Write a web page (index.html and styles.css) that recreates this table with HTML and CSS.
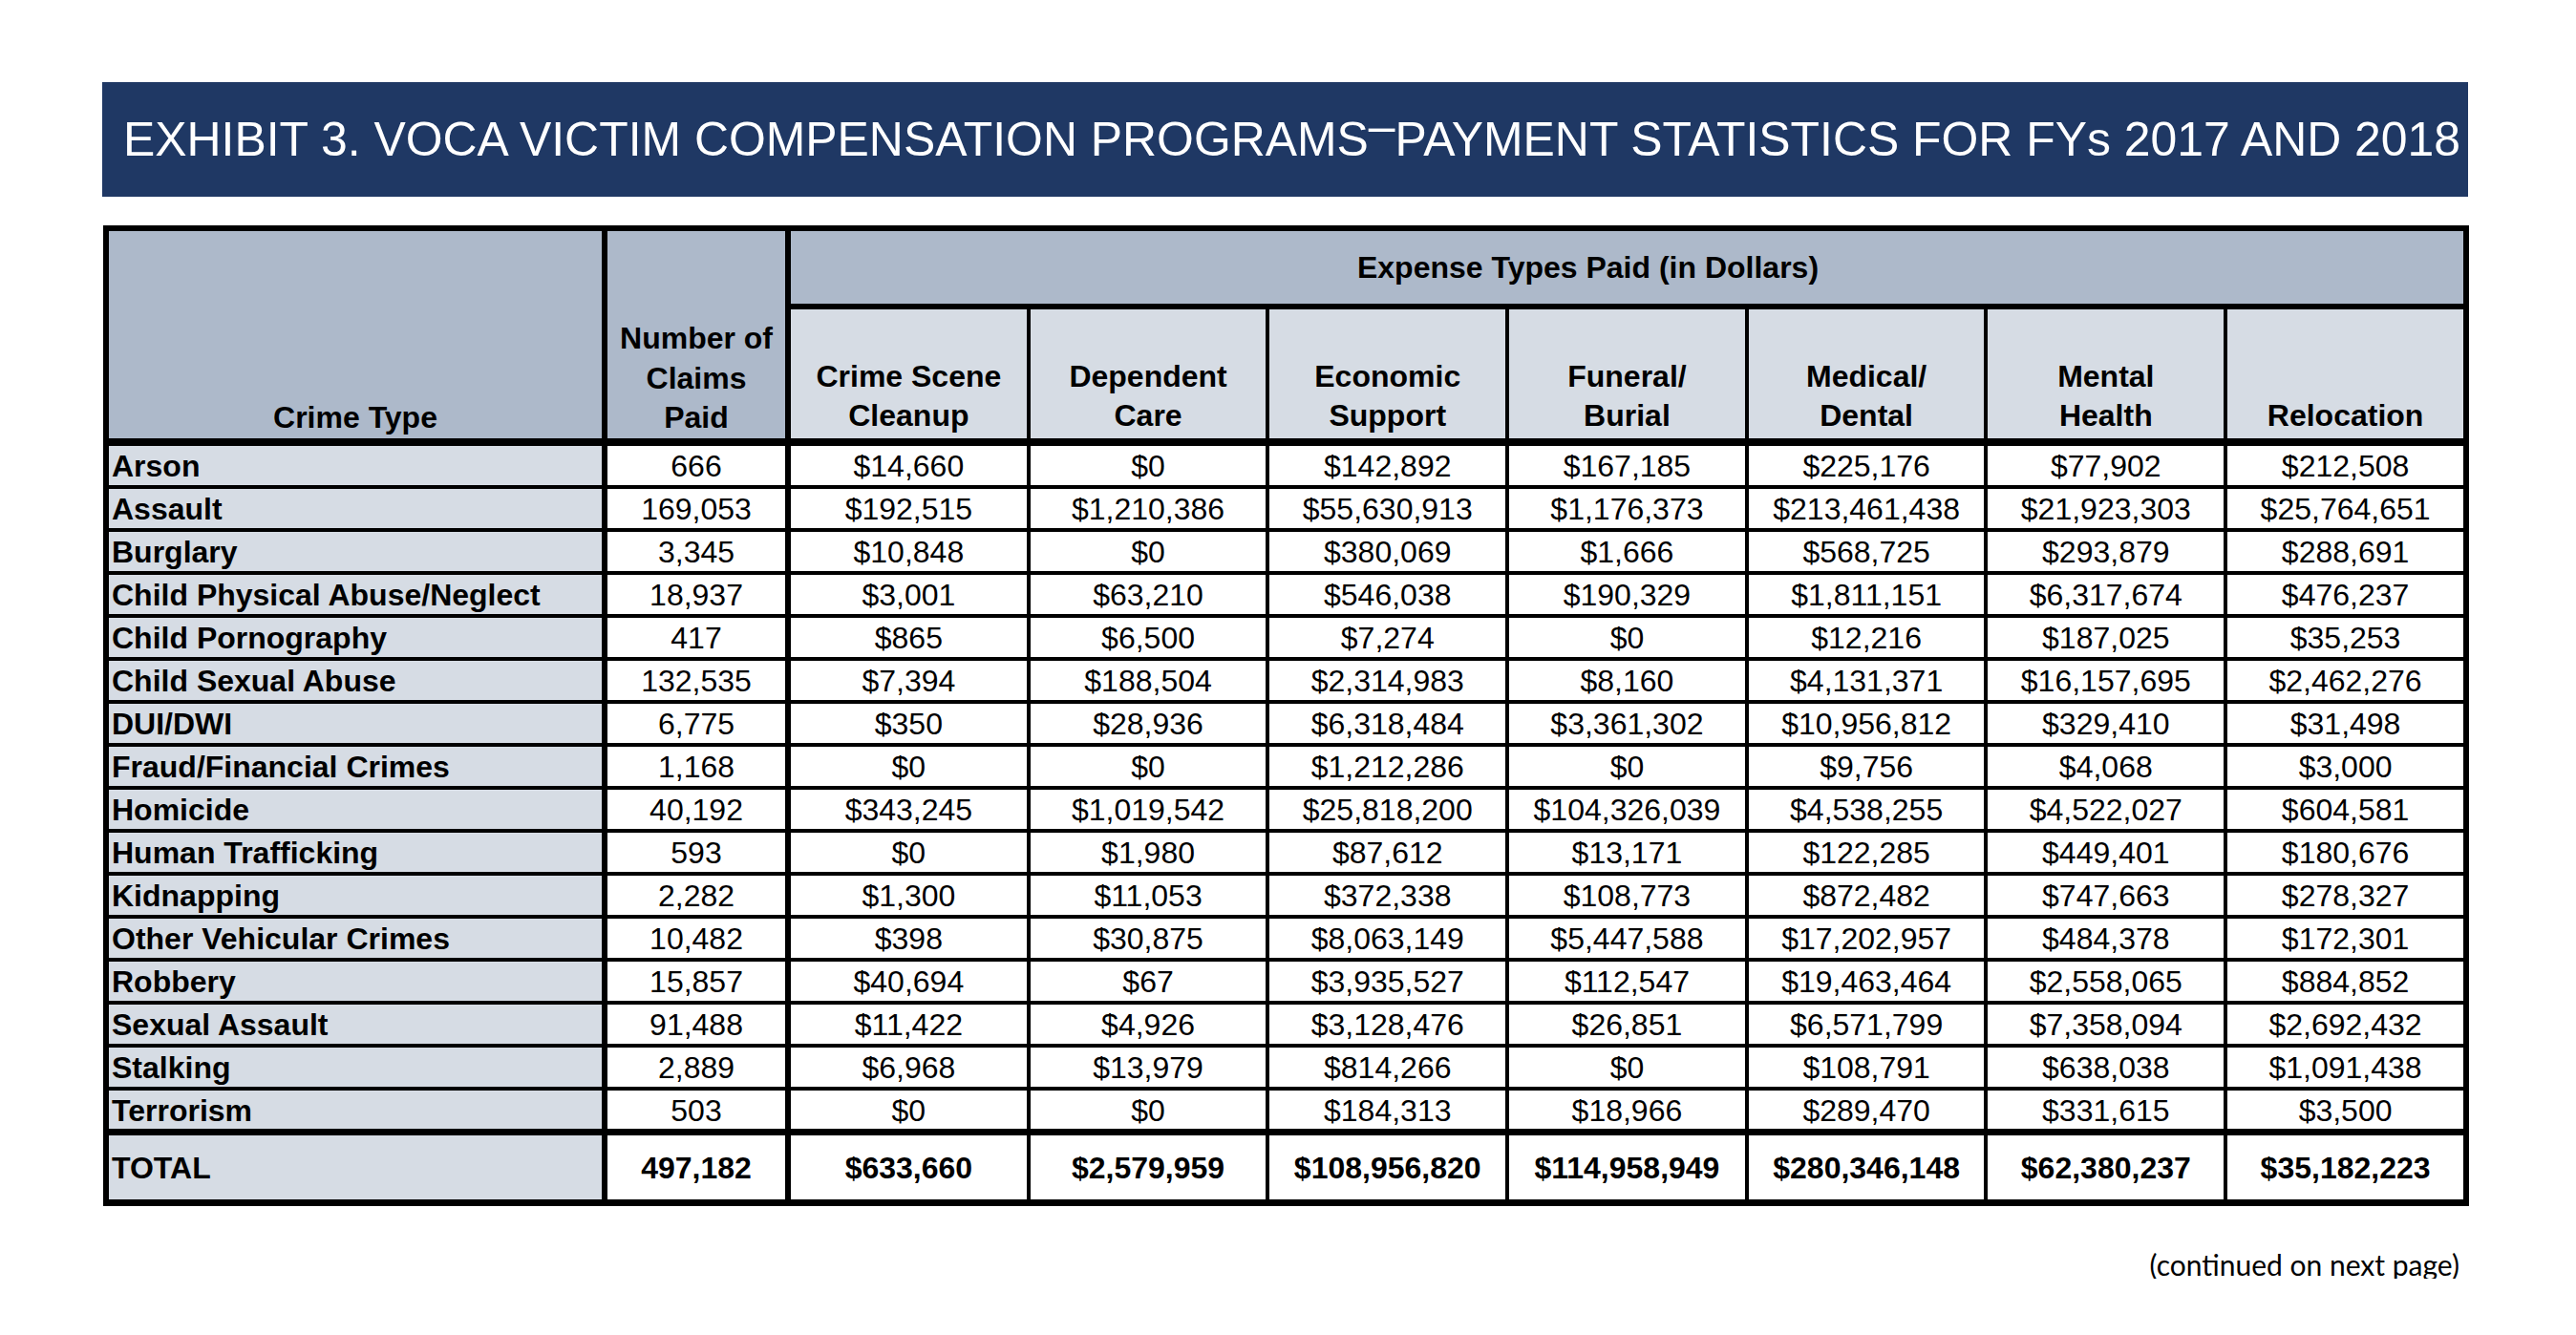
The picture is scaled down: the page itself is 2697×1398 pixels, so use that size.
FILE: index.html
```html
<!DOCTYPE html>
<html lang="en">
<head>
<meta charset="utf-8">
<title>Exhibit 3</title>
<link rel="stylesheet" href="styles.css">
</head>
<body>
<div class="page">
  <div class="title-bar"><h1 class="title">EXHIBIT 3. VOCA VICTIM COMPENSATION PROGRAMS<span class="dash">–</span>PAYMENT STATISTICS FOR FYs 2017 AND 2018</h1></div>
  <table class="stats">
    <colgroup>
      <col class="c-name"><col class="c-claims">
      <col class="c-exp"><col class="c-exp"><col class="c-exp"><col class="c-exp"><col class="c-exp"><col class="c-exp"><col class="c-last">
    </colgroup>
    <thead>
      <tr class="h1">
        <th class="hd-name" rowspan="2">Crime Type</th>
        <th class="hd-claims" rowspan="2">Number of<br>Claims<br>Paid</th>
        <th class="hd-exp" colspan="7">Expense Types Paid (in Dollars)</th>
      </tr>
      <tr class="h2">
        <th class="hd-sub">Crime Scene<br>Cleanup</th>
        <th class="hd-sub">Dependent<br>Care</th>
        <th class="hd-sub">Economic<br>Support</th>
        <th class="hd-sub">Funeral/<br>Burial</th>
        <th class="hd-sub">Medical/<br>Dental</th>
        <th class="hd-sub">Mental<br>Health</th>
        <th class="hd-sub last">Relocation</th>
      </tr>
    </thead>
    <tbody>
      <tr class="r"><td class="name">Arson</td><td class="claims">666</td><td>$14,660</td><td>$0</td><td>$142,892</td><td>$167,185</td><td>$225,176</td><td>$77,902</td><td class="last">$212,508</td></tr>
      <tr class="r"><td class="name">Assault</td><td class="claims">169,053</td><td>$192,515</td><td>$1,210,386</td><td>$55,630,913</td><td>$1,176,373</td><td>$213,461,438</td><td>$21,923,303</td><td class="last">$25,764,651</td></tr>
      <tr class="r"><td class="name">Burglary</td><td class="claims">3,345</td><td>$10,848</td><td>$0</td><td>$380,069</td><td>$1,666</td><td>$568,725</td><td>$293,879</td><td class="last">$288,691</td></tr>
      <tr class="r"><td class="name">Child Physical Abuse/Neglect</td><td class="claims">18,937</td><td>$3,001</td><td>$63,210</td><td>$546,038</td><td>$190,329</td><td>$1,811,151</td><td>$6,317,674</td><td class="last">$476,237</td></tr>
      <tr class="r"><td class="name">Child Pornography</td><td class="claims">417</td><td>$865</td><td>$6,500</td><td>$7,274</td><td>$0</td><td>$12,216</td><td>$187,025</td><td class="last">$35,253</td></tr>
      <tr class="r"><td class="name">Child Sexual Abuse</td><td class="claims">132,535</td><td>$7,394</td><td>$188,504</td><td>$2,314,983</td><td>$8,160</td><td>$4,131,371</td><td>$16,157,695</td><td class="last">$2,462,276</td></tr>
      <tr class="r"><td class="name">DUI/DWI</td><td class="claims">6,775</td><td>$350</td><td>$28,936</td><td>$6,318,484</td><td>$3,361,302</td><td>$10,956,812</td><td>$329,410</td><td class="last">$31,498</td></tr>
      <tr class="r"><td class="name">Fraud/Financial Crimes</td><td class="claims">1,168</td><td>$0</td><td>$0</td><td>$1,212,286</td><td>$0</td><td>$9,756</td><td>$4,068</td><td class="last">$3,000</td></tr>
      <tr class="r"><td class="name">Homicide</td><td class="claims">40,192</td><td>$343,245</td><td>$1,019,542</td><td>$25,818,200</td><td>$104,326,039</td><td>$4,538,255</td><td>$4,522,027</td><td class="last">$604,581</td></tr>
      <tr class="r"><td class="name">Human Trafficking</td><td class="claims">593</td><td>$0</td><td>$1,980</td><td>$87,612</td><td>$13,171</td><td>$122,285</td><td>$449,401</td><td class="last">$180,676</td></tr>
      <tr class="r"><td class="name">Kidnapping</td><td class="claims">2,282</td><td>$1,300</td><td>$11,053</td><td>$372,338</td><td>$108,773</td><td>$872,482</td><td>$747,663</td><td class="last">$278,327</td></tr>
      <tr class="r"><td class="name">Other Vehicular Crimes</td><td class="claims">10,482</td><td>$398</td><td>$30,875</td><td>$8,063,149</td><td>$5,447,588</td><td>$17,202,957</td><td>$484,378</td><td class="last">$172,301</td></tr>
      <tr class="r"><td class="name">Robbery</td><td class="claims">15,857</td><td>$40,694</td><td>$67</td><td>$3,935,527</td><td>$112,547</td><td>$19,463,464</td><td>$2,558,065</td><td class="last">$884,852</td></tr>
      <tr class="r"><td class="name">Sexual Assault</td><td class="claims">91,488</td><td>$11,422</td><td>$4,926</td><td>$3,128,476</td><td>$26,851</td><td>$6,571,799</td><td>$7,358,094</td><td class="last">$2,692,432</td></tr>
      <tr class="r"><td class="name">Stalking</td><td class="claims">2,889</td><td>$6,968</td><td>$13,979</td><td>$814,266</td><td>$0</td><td>$108,791</td><td>$638,038</td><td class="last">$1,091,438</td></tr>
      <tr class="r r-end"><td class="name">Terrorism</td><td class="claims">503</td><td>$0</td><td>$0</td><td>$184,313</td><td>$18,966</td><td>$289,470</td><td>$331,615</td><td class="last">$3,500</td></tr>
    </tbody>
    <tfoot>
      <tr class="total"><td class="name">TOTAL</td><td class="claims">497,182</td><td>$633,660</td><td>$2,579,959</td><td>$108,956,820</td><td>$114,958,949</td><td>$280,346,148</td><td>$62,380,237</td><td class="last">$35,182,223</td></tr>
    </tfoot>
  </table>
  <p class="note">(continued on next page)</p>
</div>
</body>
</html>
```

FILE: styles.css
```css
html, body {
  margin: 0;
  padding: 0;
  background: #ffffff;
}

.page {
  padding: 86px 0 0 107px;
  width: 2478px;
  font-family: "Liberation Sans", Arial, sans-serif;
  color: #000;
}

.title-bar {
  background: #1f3864;
  height: 120px;
  display: flex;
  align-items: center;
  padding-left: 22px;
  padding-bottom: 12px;
  box-sizing: border-box;
  width: 2477px;
}

.title {
  margin: 0;
  font-weight: 400;
  font-size: 49.9px;
  color: #ffffff;
  white-space: nowrap;
  line-height: 1;
}

.dash {
  vertical-align: 0.28em;
}

.stats {
  margin-top: 30px;
  margin-left: 1px;
  border: 6px solid #000;
  border-bottom-width: 7px;
  border-spacing: 0;
  border-collapse: separate;
  table-layout: fixed;
  width: 2477px;
  font-size: 32px;
}

.c-name { width: 522px; }
.c-claims { width: 192px; }
.c-exp { width: 250.7px; }
.c-last { width: 246.7px; }

.stats th,
.stats td {
  padding: 0;
  text-align: center;
  vertical-align: middle;
  border-right: 4px solid #000;
  border-bottom: 4px solid #000;
  line-height: 36px;
  white-space: nowrap;
}

.stats th {
  font-weight: 700;
  line-height: 1.3;
}

.stats .last {
  border-right: 0;
}

.h1 { height: 82px; }
.h2 { height: 143px; }

.hd-name,
.hd-claims {
  background: #adb9ca;
  vertical-align: bottom !important;
  border-right-width: 6px !important;
  border-bottom-width: 8px !important;
}

.hd-exp {
  background: #adb9ca;
  border-right: 0 !important;
  border-bottom-width: 6px !important;
  padding-top: 2px !important;
  padding-right: 82px !important;
}

.hd-sub {
  background: #d6dce4;
  vertical-align: bottom !important;
  border-bottom-width: 8px !important;
  padding-bottom: 2px !important;
}

.r { height: 45px; }
.r-end { height: 47px; }
.r-end td {
  border-bottom-width: 7px !important;
  padding-top: 2px;
}

.stats td.name {
  background: #d6dce4;
  text-align: left;
  font-weight: 700;
  padding-left: 3px;
  border-right-width: 6px;
}

.stats td.claims {
  border-right-width: 6px;
}

.total { height: 67px; }
.total td {
  border-bottom: 0 !important;
  font-weight: 700;
}

.note {
  margin: 46px 0 0 0;
  width: 2468px;
  text-align: right;
  font-family: "Lato", "Liberation Sans", sans-serif;
  font-size: 30px;
  line-height: 1;
}
```
